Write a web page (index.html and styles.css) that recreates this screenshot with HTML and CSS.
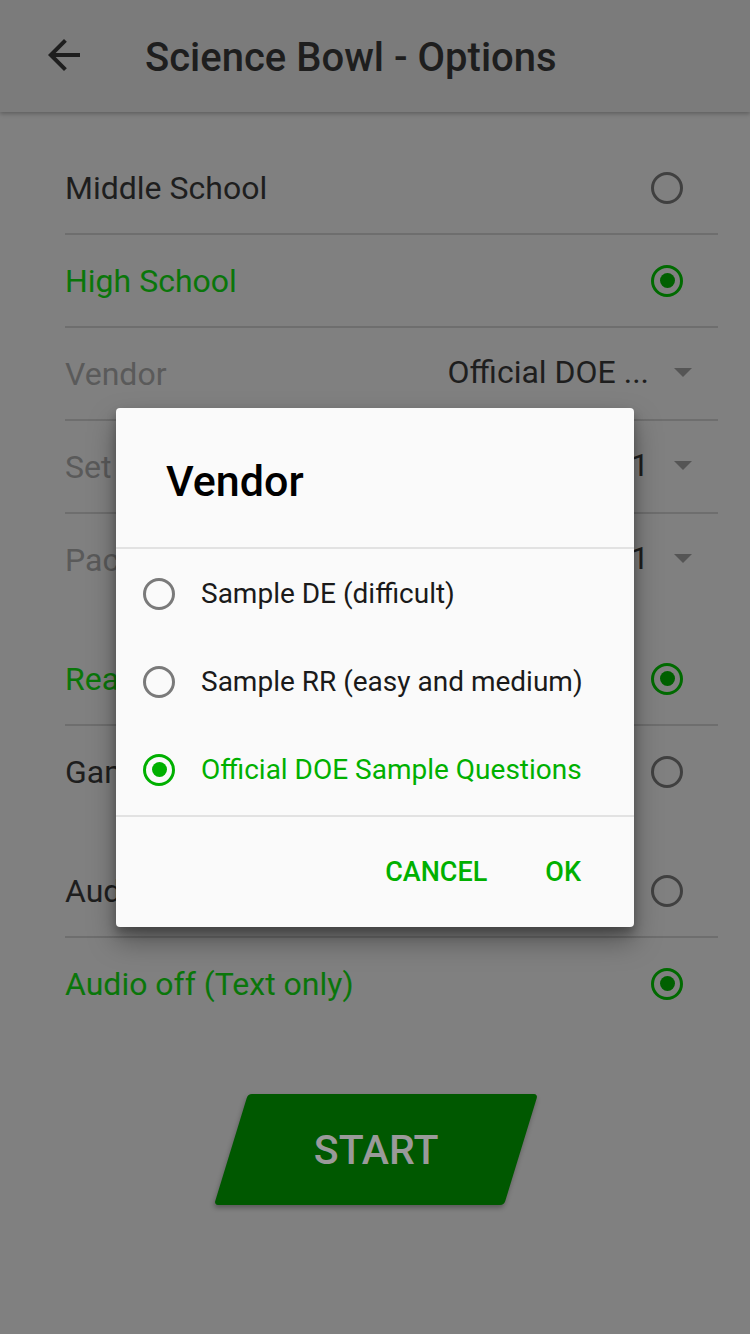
FILE: index.html
```html
<!DOCTYPE html>
<html>
<head>
<meta charset="utf-8">
<link rel="stylesheet" href="styles.css">
</head>
<body>
<div class="app">
  <header class="toolbar">
    <svg class="back" viewBox="0 0 24 24" width="48" height="48"><path d="M20 11H7.83l5.59-5.59L12 4l-8 8 8 8 1.41-1.41L7.83 13H20v-2z" fill="#1e1e1e"/></svg>
    <h1 class="title">Science Bowl - Options</h1>
  </header>
  <main class="options">
    <section class="group">
      <div class="row"><span class="label">Middle School</span><span class="radio"></span></div>
      <div class="row"><span class="label label-on">High School</span><span class="radio radio-on"></span></div>
      <div class="row"><span class="label label-muted">Vendor</span><span class="spinner"><span class="value">Official DOE ...</span><span class="caret"></span></span></div>
      <div class="row"><span class="label label-muted">Set</span><span class="spinner"><span class="value">1</span><span class="caret"></span></span></div>
      <div class="row row-last"><span class="label label-muted">Packet</span><span class="spinner"><span class="value">1</span><span class="caret"></span></span></div>
    </section>
    <section class="group">
      <div class="row"><span class="label label-on">Reading mode</span><span class="radio radio-on"></span></div>
      <div class="row row-last"><span class="label">Game mode</span><span class="radio"></span></div>
    </section>
    <section class="group">
      <div class="row"><span class="label">Audio on</span><span class="radio"></span></div>
      <div class="row row-last"><span class="label label-on">Audio off (Text only)</span><span class="radio radio-on"></span></div>
    </section>
    <div class="start-wrap"><button class="start"><span class="start-text">START</span></button></div>
  </main>

  <div class="overlay">
    <div class="dialog">
      <h2 class="dialog-title">Vendor</h2>
      <ul class="choices">
        <li class="choice"><span class="dradio"></span><span>Sample DE (difficult)</span></li>
        <li class="choice"><span class="dradio"></span><span>Sample RR (easy and medium)</span></li>
        <li class="choice choice-on"><span class="dradio dradio-on"></span><span>Official DOE Sample Questions</span></li>
      </ul>
      <div class="actions">
        <button class="action">CANCEL</button>
        <button class="action">OK</button>
      </div>
    </div>
  </div>
</div>
</body>
</html>
```
FILE: styles.css
```css
* { box-sizing: border-box; }
html, body { margin: 0; padding: 0; }
body {
  width: 750px;
  height: 1334px;
  background: #808080;
  font-family: Roboto, "Liberation Sans", sans-serif;
  overflow: hidden;
}
.app { position: relative; width: 750px; height: 1334px; }

.toolbar {
  height: 112px;
  background: #7b7b7b;
  display: flex;
  align-items: center;
  padding-left: 40px;
  box-shadow: 0 2px 4px rgba(0,0,0,0.25);
  position: relative;
  z-index: 1;
}
.back { display: block; margin-top: -2px; }
.title {
  margin: 2px 0 0 57px;
  font-size: 40px;
  font-weight: 500;
  color: #1e1e1e;
  letter-spacing: 0;
}

.options { padding: 30px 32px 0 65px; }
.group { margin-bottom: 28px; }
.group:last-of-type { margin-bottom: 0; }
.row {
  height: 93px;
  display: flex;
  align-items: center;
  justify-content: space-between;
  border-bottom: 2px solid #6e6e6e;
  padding-right: 35px;
}
.row-last { border-bottom: none; height: 91px; }
.label { font-size: 32px; color: #1e1e1e; }
.label-on { color: #0a760a; }
.label-muted { color: #5a5a5a; }

.radio {
  width: 32px; height: 32px;
  border-radius: 50%;
  border: 3.5px solid #404040;
  display: flex; align-items: center; justify-content: center;
}
.radio-on { border-color: #006a00; }
.radio-on::after {
  content: "";
  width: 15px; height: 15px;
  border-radius: 50%;
  background: #006000;
}

.spinner { display: flex; align-items: center; margin-right: -9px; margin-top: -3px; }
.value { font-size: 32px; color: #1e1e1e; }
.caret {
  margin-left: 25px;
  width: 0; height: 0;
  border-left: 9px solid transparent;
  border-right: 9px solid transparent;
  border-top: 9px solid #555;
}

.start-wrap { display: flex; justify-content: center; padding-top: 65px; margin-left: -65px; margin-right: -32px; }
.start {
  width: 290px; height: 111px;
  border: none;
  background: #005800;
  transform: skewX(-17deg);
  border-radius: 4px;
  box-shadow: 0 3px 5px rgba(0,0,0,0.3);
  display: flex; align-items: center; justify-content: center;
  padding: 0;
  margin-left: 2px;
}
.start-text {
  display: block;
  transform: skewX(17deg);
  font-family: Roboto, "Liberation Sans", sans-serif;
  font-size: 41px;
  font-weight: 500;
  color: #9a9a9a;
}

.overlay {
  position: absolute;
  inset: 0;
  display: flex;
  align-items: center;
  justify-content: center;
  z-index: 5;
}
.dialog {
  width: 518px;
  height: 519px;
  background: #fafafa;
  border-radius: 4px;
  box-shadow: 0 14px 28px rgba(0,0,0,0.35), 0 6px 10px rgba(0,0,0,0.25);
  display: flex;
  flex-direction: column;
}
.dialog-title {
  margin: 0;
  height: 141px;
  padding: 48px 0 0 50px;
  font-size: 43px;
  font-weight: 500;
  color: #000;
  border-bottom: 2px solid #e2e2e2;
}
.choices {
  list-style: none;
  margin: 0;
  padding: 1px 0;
  border-bottom: 2px solid #e2e2e2;
}
.choice {
  height: 88px;
  display: flex;
  align-items: center;
  padding-left: 27px;
  font-size: 28px;
  color: #1a1a1a;
}
.choice-on { color: #00b000; }
.dradio {
  width: 32px; height: 32px;
  border-radius: 50%;
  border: 3px solid #7a7a7a;
  margin-right: 26px;
  display: flex; align-items: center; justify-content: center;
}
.dradio-on { border-color: #00b000; border-width: 3.5px; }
.dradio-on::after {
  content: "";
  width: 15px; height: 15px;
  border-radius: 50%;
  background: #00b000;
}
.actions {
  flex: 1;
  display: flex;
  justify-content: flex-end;
  align-items: center;
  padding: 0 53px 0 0;
  gap: 58px;
}
.action {
  border: none;
  background: none;
  padding: 0;
  font-family: Roboto, "Liberation Sans", sans-serif;
  font-size: 27px;
  font-weight: 500;
  color: #00b000;
}
```
